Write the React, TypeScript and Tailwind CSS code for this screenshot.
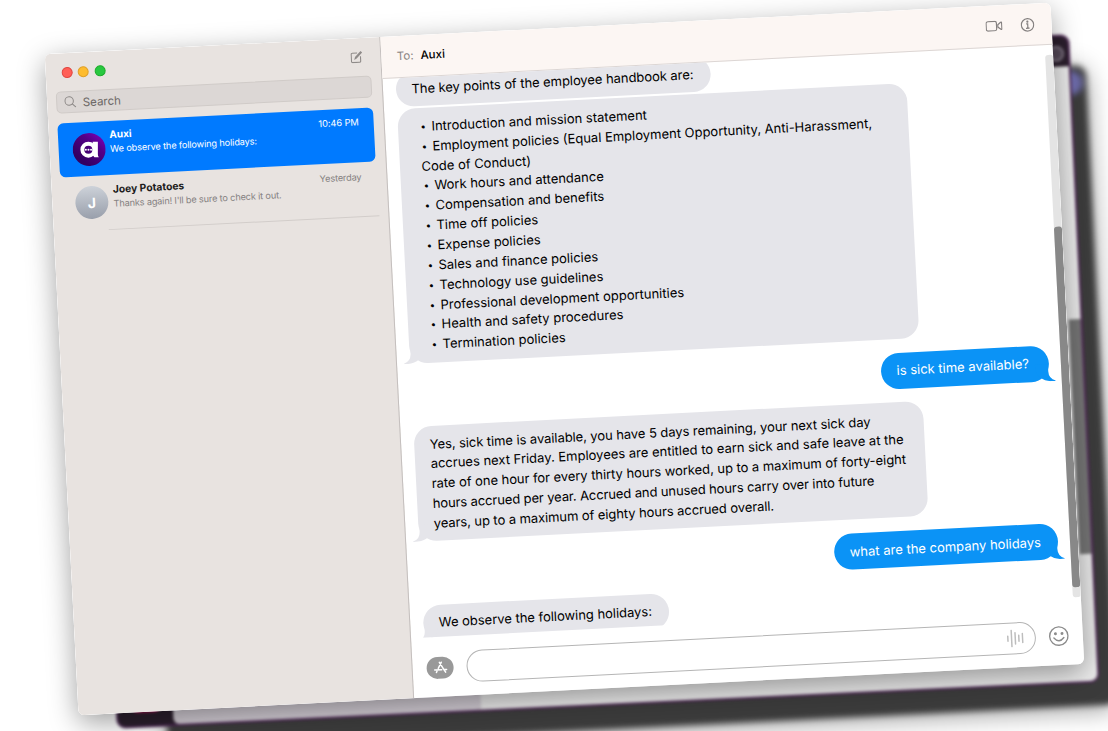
import type { ReactNode } from "react";

const POLICIES = [
  "Introduction and mission statement",
  "Employment policies (Equal Employment Opportunity, Anti-Harassment, Code of Conduct)",
  "Work hours and attendance",
  "Compensation and benefits",
  "Time off policies",
  "Expense policies",
  "Sales and finance policies",
  "Technology use guidelines",
  "Professional development opportunities",
  "Health and safety procedures",
  "Termination policies",
];

function Tail({ className }: { className: string }) {
  return (
    <svg className={`absolute bottom-0 h-[25px] w-5 ${className}`} viewBox="-13 0 20 25">
      <path d="M-13 8H0v7a10 10 0 0 0 7 9.540V25H3A16 14 0 0 1-13 11z" fill="currentColor" />
    </svg>
  );
}

function Received({ children, tail = false, className = "" }: { children: ReactNode; tail?: boolean; className?: string }) {
  return (
    <div className={`relative self-start rounded-[18px] bg-[#e5e5ea] pb-[7.500px] pl-[15.500px] pr-4 pt-[8.500px] ${className}`}>
      {tail && <Tail className="-left-[6.500px] -scale-x-100 text-[#e5e5ea]" />}
      <div className="relative whitespace-nowrap text-black">{children}</div>
    </div>
  );
}

function Sent({ children, className = "" }: { children: ReactNode; className?: string }) {
  return (
    <div className={`relative mr-[8.500px] mt-[14px] self-end rounded-[18px] bg-[#0b93f6] px-4 pb-[7.500px] pt-[8.500px] ${className}`}>
      <Tail className="-right-[6px] text-[#0b93f6]" />
      <div className="relative whitespace-nowrap text-white">{children}</div>
    </div>
  );
}

function Sidebar() {
  return (
    <aside className="flex w-[335.500px] shrink-0 flex-col border-r border-[#c4bfbd] bg-[#e8e3e0]">
      <div className="flex h-[38px] items-center pl-[15.500px] pr-[18px]">
        <div className="flex gap-[5.500px]">
          <span className="size-[11px] rounded-full border border-[#e2463f] bg-[#ff5f57]" />
          <span className="size-[11px] rounded-full border border-[#e0a028] bg-[#febc2e]" />
          <span className="size-[11px] rounded-full border border-[#1dad2b] bg-[#28c840]" />
        </div>
        <svg className="ml-auto size-3" viewBox="0 0 12 12" fill="none" stroke="#8f8b89" strokeWidth="1.100">
          <path d="M7 1.800H2.200A1.200 1.200 0 0 0 1 3v7a1.200 1.200 0 0 0 1.200 1.200H9A1.200 1.200 0 0 0 10.200 10V5.200" />
          <path d="M4.700 7.500 5.200 6 10.500.7l.8.8L6 6.800z" />
        </svg>
      </div>
      <div className="ml-[9px] mr-[9.500px] flex h-[22px] items-center rounded-[5px] border border-[#d0cbc8] bg-[#dcd7d5] pl-[6.500px] text-[11.500px] text-[#6c6866]">
        <svg className="mr-[7px] size-3" viewBox="0 0 12 12" fill="none" stroke="#8b8785" strokeWidth="1">
          <circle cx="5" cy="5" r="4.200" />
          <path d="m8 8 3.500 3.500" />
        </svg>
        <span className="pt-[3px]">Search</span>
      </div>
      <div className="ml-[8.500px] mr-[9.500px] mt-[10px] flex h-[54px] rounded-[6px] bg-[#007aff] pl-[14.500px] pr-[15px] text-white">
        <svg className="mt-[10.500px] size-[33px] shrink-0" viewBox="0 0 33 33">
          <defs>
            <linearGradient id="auxi" x1="1" y1="0" x2="0.25" y2="0.8">
              <stop offset="0" stopColor="#8a00c8" />
              <stop offset="0.450" stopColor="#540087" />
              <stop offset="1" stopColor="#330061" />
            </linearGradient>
          </defs>
          <circle cx="16.500" cy="16.500" r="16.500" fill="url(#auxi)" />
          <g transform="rotate(3 16.500 16.500)">
            <circle cx="15.700" cy="16.700" r="6" fill="none" stroke="#fff" strokeWidth="3.900" />
            <path d="M20 8.800h5.200v12.500q0 2.200 1 3h-4.500L20 22z" fill="#fff" />
            <g fill="#fff">
              <circle cx="13.200" cy="16.700" r="1" />
              <circle cx="15.800" cy="16.700" r="1" />
              <circle cx="18.400" cy="16.700" r="1" />
            </g>
          </g>
        </svg>
        <div className="ml-[4.500px] mt-[6px] flex-1">
          <div className="flex items-start justify-between leading-[15px]">
            <span className="text-[10px] font-bold">Auxi</span>
            <span className="text-[9.300px] tracking-[-0.1px]">10:46 PM</span>
          </div>
          <div className="text-[9.200px] leading-[14px] tracking-[-0.13px]">We observe the following holidays:</div>
        </div>
      </div>
      <div className="ml-6 mr-[9px] flex h-[55px] pr-4">
        <div className="-ml-px mt-[10px] flex size-[33px] shrink-0 items-center justify-center rounded-full bg-linear-to-b from-[#cdd2d9] to-[#999fab] text-[14px] font-bold text-white">
          J
        </div>
        <div className="-mr-4 ml-[-1px] flex-1 border-b border-[#d2cdca] pl-[6px] pr-[15.500px] pt-[6.500px]">
          <div className="flex items-start justify-between leading-[15px]">
            <span className="text-[10.300px] font-bold text-[#1c1b1b]">Joey Potatoes</span>
            <span className="text-[9.200px] tracking-[-0.15px] text-[#858180]">Yesterday</span>
          </div>
          <div className="text-[9.200px] leading-[14px] tracking-[-0.160px] text-[#858180]">Thanks again! I'll be sure to check it out.</div>
        </div>
      </div>
    </aside>
  );
}

function Header() {
  return (
    <header className="flex h-[42px] shrink-0 items-center border-b border-[#dcd6d4] bg-[#fcf6f3] pl-[16px] pr-[17.500px] text-[11.500px]">
      <span className="pt-px text-[#8a8583]">To:</span>
      <span className="ml-[7px] pt-px font-medium text-black">Auxi</span>
      <svg className="ml-auto h-[11px] w-[17px]" viewBox="0 0 17 11" fill="none" stroke="#858180" strokeWidth="1.200">
        <rect x=".6" y=".8" width="10.400" height="9.400" rx="1.800" />
        <path d="M12.300 4.300 15.200 2q1-.6 1 .4v6.200q0 1-1 .4l-2.900-2.300z" />
      </svg>
      <svg className="ml-[17.500px] size-[14px]" viewBox="0 0 14 14" fill="none" stroke="#858180" strokeWidth="1.200">
        <circle cx="7" cy="7" r="6.200" />
        <path d="M5.700 6h1.500v4.300M5.300 10.300h3.600" />
        <circle cx="7" cy="3.800" r=".5" fill="#858180" />
      </svg>
    </header>
  );
}

function Composer() {
  return (
    <footer className="flex flex-1 items-start pl-[14.500px] pr-[14px] pt-[14.500px]">
      <div className="mt-[5px] flex h-[22px] w-[27px] items-center justify-center rounded-[11px] bg-[#999]">
        <svg className="size-[14px]" viewBox="0 0 14 14" fill="none" stroke="#fff" strokeWidth="1.500" strokeLinecap="round">
          <path d="M6 1.500 10.800 10M8 1.500 4.600 7.500M1 9h7M10.500 9H13M3.200 10.300l-.6 1.200M10.800 10l1 1.600" />
        </svg>
      </div>
      <div className="ml-[13px] flex h-[32.500px] flex-1 items-center justify-end rounded-full border border-[#b5b5b5] bg-white pr-[11.500px]">
        <svg className="h-[18px] w-[17px]" viewBox="0 0 17 18" stroke="#bdbdbd" strokeWidth="1.500" strokeLinecap="round">
          <path d="M1 6.500v5M4.700.8v16.400M8.400 3.300v11.400M12 6v6M15.700 4.500v9" />
        </svg>
      </div>
      <svg className="ml-[13px] mt-[6.500px] size-[20px]" viewBox="0 0 20 20" fill="none" stroke="#8c8c8c" strokeWidth="1.400" strokeLinecap="round">
        <circle cx="10" cy="10" r="9.200" />
        <path d="M5 11.700q5 6 10 0" />
        <circle cx="6.700" cy="7.500" r=".8" fill="#8c8c8c" />
        <circle cx="13.300" cy="7.500" r=".8" fill="#8c8c8c" />
      </svg>
    </footer>
  );
}

export default function App() {
  return (
    <main className="relative h-[731px] w-[1108px] overflow-hidden bg-white font-['Inter','Liberation_Sans',sans-serif]">
      <div className="absolute left-[152px] top-[88px] h-[640px] w-[950px] -rotate-[2.8deg] rounded-[10px] bg-[#3b3b3b] shadow-[0_4px_24px_rgba(0,0,0,0.4)] blur-[3px]">
        <div className="absolute right-[4px] top-[5px] size-6 rounded-full bg-[#6c6aa8]" />
      </div>
      <div className="absolute left-[100.500px] top-[56.500px] flex h-[649px] w-[984px] -rotate-[2.700deg] flex-col overflow-hidden rounded-[9px] border-2 border-[#4f2856] bg-[#2b1f2d] blur-[1.500px]">
        <div className="flex h-[30px] shrink-0 items-center justify-end pr-[4px] pt-1">
          <span className="size-4 rounded-full border-2 border-[#807684] bg-[#544858]" />
        </div>
        <div className="flex flex-1">
          <div className="flex w-[55px] items-end justify-center pb-[13px]">
            <span className="h-5 w-7 rounded-md bg-[#ad1457]" />
          </div>
          <div className="w-[308px] rounded-bl-[6px] bg-[#d3cdd5]" />
          <div className="flex-1 bg-[#ececec]">
            <div className="ml-auto mt-[253px] h-[235px] w-[12px] bg-[#777]" />
          </div>
        </div>
      </div>

      <div className="absolute left-[60.500px] top-[27.500px] flex h-[662px] w-[1007px] -rotate-[2.930deg] rounded-[6px] shadow-[0_8px_28px_rgba(0,0,0,0.38)]">
        <div className="flex min-w-0 flex-1 overflow-hidden rounded-[6px] bg-white">
          <Sidebar />
          <section className="flex min-w-0 flex-1 flex-col">
            <Header />
            <div className="relative flex h-[560px] shrink-0 overflow-hidden">
              <div className="-mt-[6.500px] flex flex-1 flex-col pl-[13.500px] pr-[12px] text-[13px] leading-[19.860px]">
                <Received className="w-[314.500px] tracking-[-0.060px]">The key points of the employee handbook are:</Received>
                <Received tail className="mt-[2px] w-[509.500px]">
                  <ul className="whitespace-normal pl-[6px]">
                    {POLICIES.map((item) => (
                      <li key={item}>
                        <span className="inline-block w-[12px] pl-px align-top text-[10px]">•</span>
                        {item}
                      </li>
                    ))}
                  </ul>
                </Received>
                <Sent className="w-[168px]">is sick time available?</Sent>
                <Received tail className="mt-[13.500px] w-[509.500px]">
                  <p className="tracking-[-0.070px]">Yes, sick time is available, you have 5 days remaining, your next sick day</p>
                  <p>accrues next Friday. Employees are entitled to earn sick and safe leave at the</p>
                  <p className="tracking-[-0.050px]">rate of one hour for every thirty hours worked, up to a maximum of forty-eight</p>
                  <p className="tracking-[-0.110px]">hours accrued per year. Accrued and unused hours carry over into future</p>
                  <p className="tracking-[-0.080px]">years, up to a maximum of eighty hours accrued overall.</p>
                </Received>
                <Sent className="w-[224px]">what are the company holidays</Sent>
                <Received tail className="mt-[13.500px] w-[246px] tracking-[-0.020px]">We observe the following holidays:</Received>
              </div>
              <div className="absolute right-0 top-[10px] h-[543px] w-2 rounded-[3px] bg-[#e4e4e4] pt-[172px]">
                <div className="h-[361px] rounded-[3px] bg-[#888]" />
              </div>
            </div>
            <Composer />
          </section>
        </div>
      </div>
    </main>
  );
}
